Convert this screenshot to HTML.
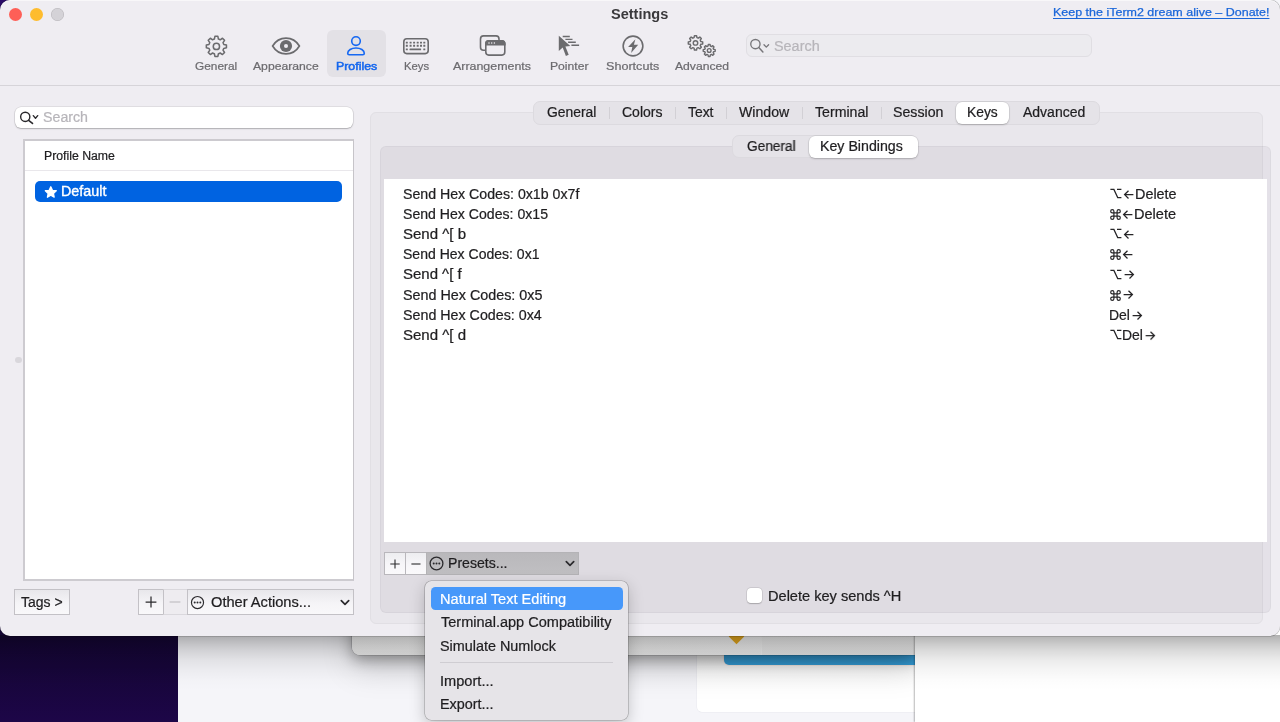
<!DOCTYPE html>
<html>
<head>
<meta charset="utf-8">
<title>Settings</title>
<style>
*{box-sizing:border-box;margin:0;padding:0}
html,body{width:1280px;height:722px;overflow:hidden}
body{font-family:"Liberation Sans",sans-serif;font-size:13px;color:#262527;background:#fff;position:relative}
.abs,.t,svg.i{position:absolute}
.t{will-change:transform;-webkit-text-stroke:.22px currentColor;white-space:nowrap;line-height:20px;height:20px;transform-origin:0 50%}
svg.i{overflow:visible}
#desk{left:0;top:0;width:1280px;height:722px;background:#f5f5f9}
#purple{left:0;top:600px;width:178.200px;height:122px;background:linear-gradient(180deg,#12052f 0%,#160538 55%,#1d0648 100%)}
#bgA{left:178px;top:600px;width:738px;height:122px;background:#f5f5f9}
#bgPanel{left:351.500px;top:600px;width:564px;height:55.200px;background:linear-gradient(180deg,#fbfbfb 36px,#e8e8e8 55px);border-radius:0 0 0 8px;box-shadow:0 0 0 .6px rgba(0,0,0,.22),0 5px 14px rgba(0,0,0,.30),0 14px 32px rgba(0,0,0,.15)}
#bgPanel2{left:760.600px;top:600px;width:155px;height:55px;background:rgba(0,0,0,.018);border-left:1px solid rgba(255,255,255,.35)}
#bgCard{left:697px;top:654px;width:219px;height:58.300px;background:#fff;border-radius:0 0 0 5px;box-shadow:0 0 0 .5px rgba(0,0,60,.05)}
#bgBlue{left:723.500px;top:654.300px;width:192px;height:10.500px;background:#37a6e4;border-radius:0 0 0 5px;box-shadow:0 0 0 .8px rgba(255,235,225,.75)}
#bgWhite{left:915.400px;top:600px;width:365px;height:122px;background:#fff;box-shadow:-1px 0 1.500px rgba(0,0,0,.28)}
#diamond{left:731px;top:631px;width:11px;height:11px;background:#e8aa1e;transform:rotate(45deg)}
#shade{left:0;top:635px;width:1280px;height:58px;background:linear-gradient(180deg,rgba(0,0,0,.31) 0,rgba(0,0,0,.25) 5px,rgba(0,0,0,.195) 10px,rgba(0,0,0,.15) 15px,rgba(0,0,0,.08) 25px,rgba(0,0,0,.04) 35px,rgba(0,0,0,.012) 45px,rgba(0,0,0,0) 56px)}
#win{left:0;top:0;width:1280px;height:635.5px;background:#efedf2;border-radius:10px;box-shadow:0 0 0 .5px rgba(0,0,0,.28),inset 0 1px 0 rgba(255,255,255,.55)}
#corner{left:0;top:0;width:12px;height:12px;background:#2a0b67}
.tl{width:13px;height:13px;border-radius:50%;top:8.300px}
#tbsel{left:327.200px;top:30px;width:58.500px;height:47.400px;background:#e3e1e6;border-radius:6px}
#tbsearch{left:746px;top:34.300px;width:346px;height:22.700px;border:1px solid #e0dee3;border-radius:6px;background:#ecebef}
#sep{left:0;top:85px;width:1280px;height:1px;background:#d6d4d9}
#lsearch{left:15px;top:106.500px;width:338px;height:21.500px;background:#fff;border-radius:6px;box-shadow:0 0 0 .5px rgba(0,0,0,.13),0 1px 1.500px rgba(0,0,0,.22)}
#plist{left:23px;top:139px;width:331px;height:442px;background:#fff;border:solid #cdcbd0;border-width:2px 1px 2px 2px;border-top-color:#cccacf;border-right-color:#c6c4c9}
#phead{left:25px;top:141px;width:327.800px;height:29.600px;border-bottom:1.500px solid #e9e7eb}
#prow{left:35px;top:181.200px;width:307px;height:20.800px;background:#0063e1;border-radius:5px}
.btn{height:26.200px;top:589.100px;border:1px solid #c3c1c6;background:linear-gradient(180deg,#e8e7eb 0,#f5f4f7 55%,#f9f8fa 100%)}
.sbtn{height:22.600px;top:552px;border:1px solid #b9b7bc;background:linear-gradient(180deg,#ededf0 0,#f7f6f9 55%,#faf9fb 100%)}
#boxB{left:370px;top:112px;width:893px;height:512.300px;background:#e9e7ec;border:1px solid #e1dfe4;border-radius:6px}
#boxA{left:380px;top:145.800px;width:891px;height:467.200px;background:rgba(118,108,132,.09);border:1px solid rgba(0,0,0,.03);border-radius:6px}
.seg{background:#e5e3e8;border:1px solid #dcdadf;border-radius:7px}
.segsel{background:#fff;border-radius:6px;box-shadow:0 0 0 .5px rgba(0,0,0,.10),0 1px 2px rgba(0,0,0,.20)}
.tsep{top:106.500px;width:1px;height:12.500px;background:#d2d0d5}
#table{left:384.400px;top:178.600px;width:882.800px;height:363.400px;background:#fff}
#menu{left:425.200px;top:580.600px;width:202.700px;height:139.700px;background:#e6e4e8;border-radius:6.500px;box-shadow:0 0 0 .6px rgba(0,0,0,.28),0 5px 16px rgba(0,0,0,.22)}
#msel{left:430.500px;top:586.600px;width:192px;height:23.400px;background:#4798fa;border-radius:4.500px}
#cb{left:747.400px;top:588.300px;width:14.400px;height:14.300px;background:#fff;border-radius:3.800px;box-shadow:0 0 0 .5px rgba(0,0,0,.12),0 .5px 1.200px rgba(0,0,0,.2)}
</style>
</head>
<body>
<svg width="0" height="0" style="position:absolute"><defs><g id="gear"><path fill="none" stroke-linejoin="round" d="M9.89 4.28L10.45 1.41L13.55 1.41L14.11 4.28A8.00 8.00 0 0 1 15.96 5.05L18.39 3.42L20.58 5.61L18.95 8.04A8.00 8.00 0 0 1 19.72 9.89L22.59 10.45L22.59 13.55L19.72 14.11A8.00 8.00 0 0 1 18.95 15.96L20.58 18.39L18.39 20.58L15.96 18.95A8.00 8.00 0 0 1 14.11 19.72L13.55 22.59L10.45 22.59L9.89 19.72A8.00 8.00 0 0 1 8.04 18.95L5.61 20.58L3.42 18.39L5.05 15.96A8.00 8.00 0 0 1 4.28 14.11L1.41 13.55L1.41 10.45L4.28 9.89A8.00 8.00 0 0 1 5.05 8.04L3.42 5.61L5.61 3.42L8.04 5.05A8.00 8.00 0 0 1 9.89 4.28Z"/><circle cx="12" cy="12" r="3.300" fill="none"/></g></defs></svg>
<div id="desk" class="abs"></div>
<div id="purple" class="abs"></div>
<div id="bgA" class="abs"></div>
<div id="bgCard" class="abs"></div>
<div id="bgBlue" class="abs"></div>
<div id="bgPanel" class="abs"></div>
<div id="bgPanel2" class="abs"></div>
<div id="diamond" class="abs"></div>
<div id="bgWhite" class="abs"></div>
<div id="shade" class="abs"></div>
<div id="corner" class="abs"></div>
<div id="win" class="abs"></div>
<div class="abs tl" style="left:8.500px;background:#fe5f57"></div>
<div class="abs tl" style="left:29.700px;background:#febc2e"></div>
<div class="abs tl" style="left:51px;background:#d4d2d7;box-shadow:inset 0 0 0 .6px rgba(0,0,0,.14)"></div>
<div class="t" style="left:611.30px;top:4.15px;font-size:14px;transform:scaleX(1.0369);color:#3a393c;font-weight:bold;-webkit-text-stroke:0;">Settings</div>
<div class="t" style="left:1053.30px;top:1.91px;font-size:11.8px;transform:scaleX(1.0581);color:#1a66d9;text-decoration:underline;text-decoration-thickness:1px;text-underline-offset:1.500px;-webkit-text-stroke:.25px #1a66d9;">Keep the iTerm2 dream alive – Donate!</div>
<div id="tbsel" class="abs"></div>
<div id="tbsearch" class="abs"></div>
<div id="sep" class="abs"></div>
<div class="t" style="left:194.50px;top:56.18px;font-size:11.3px;transform:scaleX(1.0499);color:#6c6b6f;">General</div>
<div class="t" style="left:253.30px;top:56.18px;font-size:11.3px;transform:scaleX(1.0779);color:#6c6b6f;">Appearance</div>
<div class="t" style="left:403.60px;top:56.18px;font-size:11.3px;transform:scaleX(1.0030);color:#6c6b6f;">Keys</div>
<div class="t" style="left:453.40px;top:56.18px;font-size:11.3px;transform:scaleX(1.0993);color:#6c6b6f;">Arrangements</div>
<div class="t" style="left:549.80px;top:56.18px;font-size:11.3px;transform:scaleX(1.0759);color:#6c6b6f;">Pointer</div>
<div class="t" style="left:606.30px;top:56.18px;font-size:11.3px;transform:scaleX(1.1145);color:#6c6b6f;">Shortcuts</div>
<div class="t" style="left:674.70px;top:56.18px;font-size:11.3px;transform:scaleX(1.0743);color:#6c6b6f;">Advanced</div>
<div class="t" style="left:335.70px;top:56.18px;font-size:11.3px;transform:scaleX(1.0937);color:#1466ee;-webkit-text-stroke:.5px #1466ee;">Profiles</div>
<svg class="i" style="left:204.500px;top:34.600px" width="22.800" height="22.800" viewBox="0 0 24 24"><use href="#gear" stroke="#6b6b6e" stroke-width="1.600"/></svg>
<svg class="i" style="left:271px;top:36px" width="30" height="20" viewBox="0 0 30 20"><path d="M1.600 10C4.700 4.800 9.500 2.100 15 2.100S25.300 4.800 28.400 10C25.300 15.200 20.500 17.900 15 17.900S4.700 15.200 1.600 10Z" fill="none" stroke="#6b6b6e" stroke-width="1.650"/><circle cx="15" cy="10" r="6.100" fill="#6b6b6e"/><circle cx="15" cy="10" r="2.050" fill="#efedf2"/></svg>
<svg class="i" style="left:345px;top:35px" width="22" height="22" viewBox="0 0 22 22"><circle cx="11" cy="6.100" r="4.300" fill="none" stroke="#1668f2" stroke-width="1.600"/><path d="M2.700 18.300c0-3.100 3.700-5.300 8.300-5.300s8.300 2.200 8.300 5.300c0 .9-.5 1.500-1.500 1.500H4.200c-1 0-1.500-.6-1.500-1.500Z" fill="none" stroke="#1668f2" stroke-width="1.600"/></svg>
<svg class="i" style="left:402.900px;top:37.800px" width="26" height="16.400" viewBox="0 0 26 16.400"><rect x=".8" y=".8" width="24.400" height="14.800" rx="3" fill="none" stroke="#6b6b6e" stroke-width="1.600"/><g fill="#6b6b6e"><rect x="2.8" y="3.7" width="2" height="1.900" rx=".3"/><rect x="6.6" y="3.7" width="2" height="1.900" rx=".3"/><rect x="10.1" y="3.7" width="2" height="1.900" rx=".3"/><rect x="13.7" y="3.7" width="2" height="1.900" rx=".3"/><rect x="17.0" y="3.7" width="2" height="1.900" rx=".3"/><rect x="20.3" y="3.7" width="2" height="1.900" rx=".3"/><rect x="2.8" y="6.8" width="2" height="1.900" rx=".3"/><rect x="6.6" y="6.8" width="2" height="1.900" rx=".3"/><rect x="10.1" y="6.8" width="2" height="1.900" rx=".3"/><rect x="13.7" y="6.8" width="2" height="1.900" rx=".3"/><rect x="17.0" y="6.8" width="2" height="1.900" rx=".3"/><rect x="20.3" y="6.8" width="2" height="1.900" rx=".3"/><rect x="2.800" y="10.400" width="2" height="1.900" rx=".3"/><rect x="6.500" y="10.400" width="11.600" height="1.900" rx=".5"/><rect x="20.300" y="10.400" width="2" height="1.900" rx=".3"/></g></svg>
<svg class="i" style="left:479px;top:34px" width="28" height="23" viewBox="0 0 28 23"><rect x="1.500" y="1.900" width="18.500" height="14.300" rx="3" fill="none" stroke="#6b6b6e" stroke-width="1.600"/><rect x="6.800" y="6.800" width="19" height="14.300" rx="3" fill="#efedf2" stroke="#6b6b6e" stroke-width="1.600"/><path d="M6.800 9.800A3 3 0 0 1 9.800 6.800h13a3 3 0 0 1 3 3v1H6.800Z" fill="#6b6b6e" stroke="#6b6b6e" stroke-width="1.600"/><circle cx="10" cy="8.900" r=".75" fill="#efedf2"/><circle cx="12.700" cy="8.900" r=".75" fill="#efedf2"/><circle cx="15.400" cy="8.900" r=".75" fill="#efedf2"/></svg>
<svg class="i" style="left:556px;top:33px" width="26" height="25" viewBox="0 0 26 25"><path d="M2.800 2.700V18L6.700 14.500 9.900 22.900 12.700 21.800 9.400 13.600 14.300 13Z" fill="#6b6b6e"/><path d="M6.700 3.500H13.800M9.400 6.300H16.500M12.100 9.200H19.800M15.400 12.200H23.100" stroke="#6b6b6e" stroke-width="1.350"/></svg>
<svg class="i" style="left:621.100px;top:33.700px" width="24" height="24" viewBox="0 0 24 24"><circle cx="12" cy="12" r="9.850" fill="none" stroke="#6b6b6e" stroke-width="1.600"/><path d="M14.400 5.200 7.100 12.900H11.300L10.100 18.900 17.200 10.700H12.900Z" fill="#6b6b6e"/></svg>
<svg class="i" style="left:0;top:0" width="1" height="1"><g transform="translate(687.34 34.74) scale(0.6799)"><use href="#gear" stroke="#6b6b6e" stroke-width="2.13"/></g><g transform="translate(702.41 43.71) scale(0.5654)"><use href="#gear" stroke="#6b6b6e" stroke-width="2.48"/></g></svg>
<svg class="i" style="left:749px;top:38px" width="22" height="16" viewBox="0 0 22 16"><circle cx="6.400" cy="6.100" r="4.650" fill="none" stroke="#77767a" stroke-width="1.350"/><path d="M9.800 9.600 13.900 13.900" stroke="#77767a" stroke-width="1.500" stroke-linecap="round"/><path d="M15 6.700 17.300 9.100 19.600 6.700" fill="none" stroke="#77767a" stroke-width="1.300" stroke-linecap="round" stroke-linejoin="round"/></svg>
<div class="t" style="left:773.80px;top:37.22px;font-size:13.8px;transform:scaleX(1.0442);color:#b7b5ba;">Search</div>
<div id="lsearch" class="abs"></div>
<svg class="i" style="left:19px;top:111px" width="22" height="15" viewBox="0 0 22 15"><circle cx="6.250" cy="5.850" r="4.600" fill="none" stroke="#29282b" stroke-width="1.400"/><path d="M9.600 9.300 13.500 12.400" stroke="#29282b" stroke-width="1.600" stroke-linecap="round"/><path d="M14.300 4.600 16.500 7.200 18.700 4.600" fill="none" stroke="#29282b" stroke-width="1.350" stroke-linecap="round" stroke-linejoin="round"/></svg>
<div class="t" style="left:43.20px;top:107.62px;font-size:13.8px;transform:scaleX(1.0299);color:#b7b5ba;">Search</div>
<div id="plist" class="abs"></div>
<div id="phead" class="abs"></div>
<div class="t" style="left:43.90px;top:146.06px;font-size:12px;transform:scaleX(1.0211);color:#1f1e20;">Profile Name</div>
<div id="prow" class="abs"></div>
<svg class="i" style="left:44px;top:185px" width="14" height="14" viewBox="0 0 14 14"><path d="M6.80 1.80L8.42 5.33L12.27 5.77L9.42 8.40L10.18 12.20L6.80 10.30L3.42 12.20L4.18 8.40L1.33 5.77L5.18 5.33Z" fill="#fff" stroke="#fff" stroke-width="1.300" stroke-linejoin="round"/></svg>
<div class="t" style="left:61.00px;top:181.82px;font-size:13.8px;transform:scaleX(1.0381);color:#fff;-webkit-text-stroke:.35px #fff;">Default</div>
<div class="abs btn" style="left:14px;width:56px"></div>
<div class="t" style="left:21.20px;top:592.62px;font-size:13.8px;transform:scaleX(1.0137);color:#1f1e20;">Tags &gt;</div>
<div class="abs btn" style="left:137.500px;width:26px"></div>
<div class="abs btn" style="left:162.500px;width:25px;background:#eeecf0;border-color:#dad8dd #c3c1c6 #dad8dd #c3c1c6"></div>
<div class="abs btn" style="left:186.500px;width:167.300px"></div>
<svg class="i" style="left:144.700px;top:596px" width="12" height="12" viewBox="0 0 12 12"><path d="M6 .6V11.400M.6 6H11.400" stroke="#2b2a2d" stroke-width="1.250"/></svg>
<svg class="i" style="left:169px;top:596px" width="12" height="12" viewBox="0 0 12 12"><path d="M.6 6H11.400" stroke="#c3c1c6" stroke-width="1.250"/></svg>
<svg class="i" style="left:190.100px;top:594.500px" width="15" height="15" viewBox="0 0 15 15"><circle cx="7.500" cy="7.500" r="6.050" fill="none" stroke="#2b2a2d" stroke-width="1.150"/><circle cx="4.700" cy="7.500" r="1" fill="#2b2a2d"/><circle cx="7.500" cy="7.500" r="1" fill="#2b2a2d"/><circle cx="10.300" cy="7.500" r="1" fill="#2b2a2d"/></svg>
<div class="t" style="left:210.60px;top:592.52px;font-size:13.8px;transform:scaleX(1.0601);color:#1f1e20;">Other Actions...</div>
<svg class="i" style="left:339.700px;top:598.700px" width="10" height="7" viewBox="0 0 10 7"><path d="M1.300 1.600 5 5.300 8.700 1.600" fill="none" stroke="#2b2a2d" stroke-width="1.700" stroke-linecap="round" stroke-linejoin="round"/></svg>
<div class="abs" style="left:15.400px;top:356.800px;width:6.400px;height:6.400px;border-radius:50%;background:#d9d7dc"></div>
<div id="boxB" class="abs"></div>
<div id="boxA" class="abs"></div>
<div class="abs seg" style="left:533px;top:101px;width:566.600px;height:23.600px"></div>
<div class="abs segsel" style="left:955.800px;top:102.300px;width:53.600px;height:21.600px"></div>
<div class="abs tsep" style="left:608.7px"></div><div class="abs tsep" style="left:675.0px"></div><div class="abs tsep" style="left:726.0px"></div><div class="abs tsep" style="left:801.6px"></div><div class="abs tsep" style="left:880.6px"></div>
<div class="t" style="left:547.10px;top:103.22px;font-size:13.8px;transform:scaleX(1.0045);color:#1f1e20;">General</div>
<div class="t" style="left:621.80px;top:103.22px;font-size:13.8px;transform:scaleX(1.0157);color:#1f1e20;">Colors</div>
<div class="t" style="left:688.30px;top:103.25px;font-size:13.8px;transform:scaleX(1.0068);color:#1f1e20;">Text</div>
<div class="t" style="left:739.40px;top:103.22px;font-size:13.8px;transform:scaleX(1.0221);color:#1f1e20;">Window</div>
<div class="t" style="left:815.00px;top:103.22px;font-size:13.8px;transform:scaleX(1.0245);color:#1f1e20;">Terminal</div>
<div class="t" style="left:892.80px;top:103.22px;font-size:13.8px;transform:scaleX(1.0267);color:#1f1e20;">Session</div>
<div class="t" style="left:967.00px;top:103.22px;font-size:13.8px;transform:scaleX(0.9855);color:#1f1e20;">Keys</div>
<div class="t" style="left:1023.00px;top:103.23px;font-size:13.8px;transform:scaleX(1.0147);color:#1f1e20;">Advanced</div>
<div class="abs seg" style="left:732.400px;top:135.300px;width:186px;height:23.200px"></div>
<div class="abs segsel" style="left:808.900px;top:136.300px;width:109px;height:21.400px"></div>
<div class="t" style="left:746.80px;top:137.22px;font-size:13.8px;transform:scaleX(0.9903);color:#1f1e20;">General</div>
<div class="t" style="left:820.20px;top:137.22px;font-size:13.8px;transform:scaleX(1.0283);color:#1f1e20;">Key Bindings</div>
<div id="table" class="abs"></div>
<div class="t" style="left:403.40px;top:185.42px;font-size:13.8px;transform:scaleX(1.0263);color:#1f1e20;">Send Hex Codes: 0x1b 0x7f</div>
<svg class="i" style="left:1110.35px;top:188.20px" width="12" height="11" viewBox="0 0 12 11"><path d="M.4 1.400H3.900L7.700 9.600H11.400M7 1.400H11.400" fill="none" stroke="#262527" stroke-width="1.250"/></svg><svg class="i" style="left:1124.00px;top:189.60px" width="10" height="9.200" viewBox="0 0 10 9.200"><path d="M.6 4.600H9.400M4.500.7.600 4.600 4.500 8.500" fill="none" stroke="#262527" stroke-width="1.300" stroke-linejoin="miter"/></svg><div class="t" style="left:1135.20px;top:185.42px;font-size:13.8px;transform:scaleX(1.0433);color:#1f1e20;">Delete</div>

<div class="t" style="left:403.40px;top:205.22px;font-size:13.8px;transform:scaleX(1.0218);color:#1f1e20;">Send Hex Codes: 0x15</div>
<svg class="i" style="left:1110.30px;top:209.00px" width="11" height="11" viewBox="0 0 11 11"><path d="M3.900 3.900H7.100V7.100H3.900ZM3.900 3.900V2.300A1.600 1.600 0 1 0 2.300 3.900ZM7.100 3.900H8.700A1.600 1.600 0 1 0 7.100 2.300ZM7.100 7.100V8.700A1.600 1.600 0 1 0 8.700 7.100ZM3.900 7.100H2.300A1.600 1.600 0 1 0 3.900 8.700Z" fill="none" stroke="#262527" stroke-width="1.200"/></svg><svg class="i" style="left:1123.10px;top:209.50px" width="10" height="9.200" viewBox="0 0 10 9.200"><path d="M.6 4.600H9.400M4.500.7.600 4.600 4.500 8.500" fill="none" stroke="#262527" stroke-width="1.300" stroke-linejoin="miter"/></svg><div class="t" style="left:1134.20px;top:205.22px;font-size:13.8px;transform:scaleX(1.0537);color:#1f1e20;">Delete</div>

<div class="t" style="left:403.40px;top:225.42px;font-size:13.8px;transform:scaleX(1.0887);color:#1f1e20;">Send ^[ b</div>
<svg class="i" style="left:1110.35px;top:228.20px" width="12" height="11" viewBox="0 0 12 11"><path d="M.4 1.400H3.900L7.700 9.600H11.400M7 1.400H11.400" fill="none" stroke="#262527" stroke-width="1.250"/></svg><svg class="i" style="left:1124.00px;top:229.60px" width="10" height="9.200" viewBox="0 0 10 9.200"><path d="M.6 4.600H9.400M4.500.7.600 4.600 4.500 8.500" fill="none" stroke="#262527" stroke-width="1.300" stroke-linejoin="miter"/></svg>
<div class="t" style="left:403.40px;top:244.62px;font-size:13.8px;transform:scaleX(1.0167);color:#1f1e20;">Send Hex Codes: 0x1</div>
<svg class="i" style="left:1110.30px;top:249.40px" width="11" height="11" viewBox="0 0 11 11"><path d="M3.900 3.900H7.100V7.100H3.900ZM3.900 3.900V2.300A1.600 1.600 0 1 0 2.300 3.900ZM7.100 3.900H8.700A1.600 1.600 0 1 0 7.100 2.300ZM7.100 7.100V8.700A1.600 1.600 0 1 0 8.700 7.100ZM3.900 7.100H2.300A1.600 1.600 0 1 0 3.900 8.700Z" fill="none" stroke="#262527" stroke-width="1.200"/></svg><svg class="i" style="left:1123.10px;top:249.90px" width="10" height="9.200" viewBox="0 0 10 9.200"><path d="M.6 4.600H9.400M4.500.7.600 4.600 4.500 8.500" fill="none" stroke="#262527" stroke-width="1.300" stroke-linejoin="miter"/></svg>
<div class="t" style="left:403.40px;top:264.72px;font-size:13.8px;transform:scaleX(1.0851);color:#1f1e20;">Send ^[ f</div>
<svg class="i" style="left:1110.35px;top:268.60px" width="12" height="11" viewBox="0 0 12 11"><path d="M.4 1.400H3.900L7.700 9.600H11.400M7 1.400H11.400" fill="none" stroke="#262527" stroke-width="1.250"/></svg><svg class="i" style="left:1124.00px;top:270.00px" width="10" height="9.200" viewBox="0 0 10 9.200"><path d="M.6 4.600H9.400M5.500.7 9.400 4.600 5.500 8.500" fill="none" stroke="#262527" stroke-width="1.300" stroke-linejoin="miter"/></svg>
<div class="t" style="left:403.40px;top:285.82px;font-size:13.8px;transform:scaleX(1.0390);color:#1f1e20;">Send Hex Codes: 0x5</div>
<svg class="i" style="left:1110.30px;top:289.80px" width="11" height="11" viewBox="0 0 11 11"><path d="M3.900 3.900H7.100V7.100H3.900ZM3.900 3.900V2.300A1.600 1.600 0 1 0 2.300 3.900ZM7.100 3.900H8.700A1.600 1.600 0 1 0 7.100 2.300ZM7.100 7.100V8.700A1.600 1.600 0 1 0 8.700 7.100ZM3.900 7.100H2.300A1.600 1.600 0 1 0 3.900 8.700Z" fill="none" stroke="#262527" stroke-width="1.200"/></svg><svg class="i" style="left:1123.10px;top:290.30px" width="10" height="9.200" viewBox="0 0 10 9.200"><path d="M.6 4.600H9.400M5.500.7 9.400 4.600 5.500 8.500" fill="none" stroke="#262527" stroke-width="1.300" stroke-linejoin="miter"/></svg>
<div class="t" style="left:403.40px;top:306.42px;font-size:13.8px;transform:scaleX(1.0339);color:#1f1e20;">Send Hex Codes: 0x4</div>
<div class="t" style="left:1109.20px;top:306.42px;font-size:13.8px;transform:scaleX(1.0107);color:#1f1e20;">Del</div>
<svg class="i" style="left:1131.60px;top:310.60px" width="10" height="9.200" viewBox="0 0 10 9.200"><path d="M.6 4.600H9.400M5.500.7 9.400 4.600 5.500 8.500" fill="none" stroke="#262527" stroke-width="1.300" stroke-linejoin="miter"/></svg>
<div class="t" style="left:403.40px;top:325.82px;font-size:13.8px;transform:scaleX(1.0887);color:#1f1e20;">Send ^[ d</div>
<svg class="i" style="left:1110.35px;top:329.30px" width="12" height="11" viewBox="0 0 12 11"><path d="M.4 1.400H3.900L7.700 9.600H11.400M7 1.400H11.400" fill="none" stroke="#262527" stroke-width="1.250"/></svg><div class="t" style="left:1122.00px;top:325.82px;font-size:13.8px;transform:scaleX(1.0107);color:#1f1e20;">Del</div>
<svg class="i" style="left:1145.00px;top:330.70px" width="10" height="9.200" viewBox="0 0 10 9.200"><path d="M.6 4.600H9.400M5.500.7 9.400 4.600 5.500 8.500" fill="none" stroke="#262527" stroke-width="1.300" stroke-linejoin="miter"/></svg>
<div class="abs sbtn" style="left:384px;width:22px"></div>
<div class="abs sbtn" style="left:405px;width:21.500px"></div>
<div class="abs sbtn" style="left:425.500px;width:153.200px;background:linear-gradient(180deg,#b9b8bb,#c0bfc2);border-color:#b4b3b6"></div>
<svg class="i" style="left:389.900px;top:558.500px" width="10" height="10" viewBox="0 0 10 10"><path d="M5 .5V9.500M.3 5H9.700" stroke="#2b2a2d" stroke-width="1.100"/></svg>
<svg class="i" style="left:410.700px;top:558.500px" width="10" height="10" viewBox="0 0 10 10"><path d="M.4 5H9.500" stroke="#2b2a2d" stroke-width="1.100"/></svg>
<svg class="i" style="left:428.800px;top:555.700px" width="15" height="15" viewBox="0 0 15 15"><circle cx="7.500" cy="7.500" r="6.400" fill="none" stroke="#2b2a2d" stroke-width="1.300"/><circle cx="4.700" cy="7.500" r="1" fill="#2b2a2d"/><circle cx="7.500" cy="7.500" r="1" fill="#2b2a2d"/><circle cx="10.300" cy="7.500" r="1" fill="#2b2a2d"/></svg>
<div class="t" style="left:448.40px;top:553.62px;font-size:13.8px;transform:scaleX(1.0204);color:#1f1e20;">Presets...</div>
<svg class="i" style="left:564.700px;top:560px" width="10" height="7" viewBox="0 0 10 7"><path d="M1.300 1.600 5 5.300 8.700 1.600" fill="none" stroke="#2b2a2d" stroke-width="1.700" stroke-linecap="round" stroke-linejoin="round"/></svg>
<div id="cb" class="abs"></div>
<div class="t" style="left:767.80px;top:586.62px;font-size:13.8px;transform:scaleX(1.0565);color:#1f1e20;">Delete key sends ^H</div>
<div id="menu" class="abs"></div>
<div id="msel" class="abs"></div>
<div class="t" style="left:440.10px;top:590.02px;font-size:13.8px;transform:scaleX(1.0569);color:#fff;-webkit-text-stroke:.2px #fff;">Natural Text Editing</div>
<div class="t" style="left:441.10px;top:612.52px;font-size:13.8px;transform:scaleX(1.0532);color:#1f1e20;">Terminal.app Compatibility</div>
<div class="t" style="left:440.10px;top:637.02px;font-size:13.8px;transform:scaleX(1.0429);color:#1f1e20;">Simulate Numlock</div>
<div class="abs" style="left:440.300px;top:662.200px;width:172.600px;height:1px;background:#cfcdd2"></div>
<div class="t" style="left:440.10px;top:672.02px;font-size:13.8px;transform:scaleX(1.0586);color:#1f1e20;">Import...</div>
<div class="t" style="left:440.10px;top:695.42px;font-size:13.8px;transform:scaleX(1.0433);color:#1f1e20;">Export...</div>
</body>
</html>
